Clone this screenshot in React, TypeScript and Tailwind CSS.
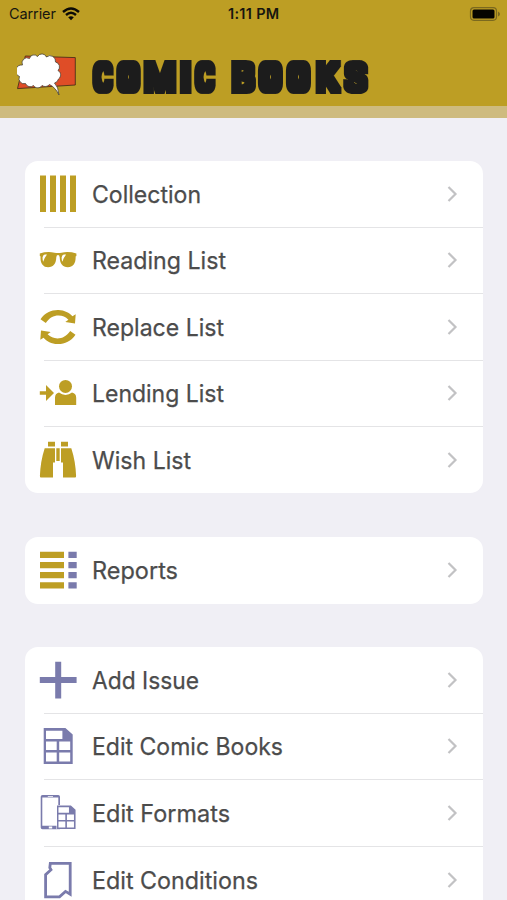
import type { ReactNode } from "react";

const GOLD = "#bd9e24";
const VIOLET = "#7a7bac";

type Item = { label: string; width: number; icon: ReactNode };

const Icon = ({ children }: { children: ReactNode }) => (
  <svg viewBox="0 0 38 38" className="h-[38px] w-[38px] shrink-0 overflow-visible">
    {children}
  </svg>
);

const CollectionIcon = () => (
  <Icon>
    <path fill={GOLD} d="M1 .5h6v36.500H1zM11 .5h6v36.500h-6zM21 .5h6v36.500h-6zM31 .5h6v36.500h-6z" />
  </Icon>
);

const GlassesIcon = () => (
  <Icon>
    <path
      fill={GOLD}
      d="M.8 12.600Q8 10.200 15.500 11.700Q19 12.500 22.500 11.700Q30 10.200 37.400 12.600L37.400 15L36.600 15.600C37 22 34 26.200 28.900 26.200C23.500 26.200 20.900 22.500 20.700 16.200Q20.500 14 19 14Q17.500 14 17.300 16.200C17.100 22.500 14.500 26.200 9.100 26.200C4 26.200 1 22 1.600 15.600L.8 15Z"
    />
    <path
      fill="#fff"
      d="M6 13.600Q3.600 14 3.500 16.600Q3.500 19 4.200 20.800Q5.600 16.500 8 13.500ZM25 13.600Q22.700 14 22.600 16.600Q22.600 19 23.300 20.800Q24.700 16.500 27.100 13.500Z"
    />
  </Icon>
);

const arrowArc =
  "M1.500 11.200C6 4.500 12.500 1.700 19.500 1.900C25.500 2.100 30.300 4.600 33.500 8.300L36.700 6.200L36 15.500L26.300 14L29.400 11.700C26.500 8.900 23.500 7.600 19.600 7.600C14.500 7.600 10.300 10 6.800 15Z";

const ReplaceIcon = () => (
  <Icon>
    <path fill={GOLD} d={arrowArc} />
    <path fill={GOLD} transform="rotate(180 19 19)" d={arrowArc} />
  </Icon>
);

const LendingIcon = () => (
  <Icon>
    <path fill={GOLD} d="M.8 17.200h6.200V11L15 19L7 27V20.800H.8z" />
    <circle fill={GOLD} cx="26.500" cy="12.400" r="6.500" />
    <path fill={GOLD} d="M16 31V23.700Q16 19.700 20 18.600Q23 20.900 26.500 20.900Q30 20.900 33 18.600Q37.200 19.700 37.200 23.700V31z" />
  </Icon>
);

const BinocularsIcon = () => (
  <Icon>
    <path
      fill={GOLD}
      d="M9 .8h7v4.800H9zM22 .8h7v4.800h-7zM5.700 7.300H16V21.500H14V36.500H2Q.8 36.500 .9 35Q1.500 20 5.700 7.300ZM22 7.300H32.300Q36.500 20 37.100 35Q37.200 36.500 36 36.500H24V21.500H22ZM17.300 7.300h3.400v12.800h-3.400z"
    />
  </Icon>
);

const ReportsIcon = () => (
  <Icon>
    <path fill={GOLD} d="M1 .8h24V7H1zM1 11h24v6.200H1zM1 21h24v6.200H1zM1 31.200h24v6.200H1z" />
    <path fill={VIOLET} d="M29.400.8H37.700V7h-8.300zM29.400 11h8.300v6.200h-8.300zM29.400 21h8.300v6.200h-8.300zM29.400 31.200h8.300v6.200h-8.300z" />
  </Icon>
);

const PlusIcon = () => (
  <Icon>
    <path fill={VIOLET} d="M16.200.8h6v15.300h15.400v6H22.200v15.300h-6V22.100H.8v-6h15.400z" />
  </Icon>
);

const SheetShape = () => (
  <path
    fill={VIOLET}
    fillRule="evenodd"
    d="M0 0H21.700L29 6.500V36H0ZM2.300 2.700V11H18.700V2.700ZM2.300 13.600V22H13V13.600ZM15.500 13.600V22H26.500V13.600ZM2.300 24.600V33.500H13V24.600ZM15.500 24.600V33.500H26.500V24.600Z"
  />
);

const SheetIcon = () => (
  <Icon>
    <g transform="translate(4.700 1)">
      <SheetShape />
    </g>
  </Icon>
);

const FormatsIcon = () => (
  <Icon>
    <path
      fill={VIOLET}
      fillRule="evenodd"
      d="M3.500.9H19.200Q21 .9 21 2.700V35.200H3.500Q1.700 35.200 1.700 33.400V2.700Q1.700.9 3.500.9ZM3.300 3.500V31.700H19.300V3.500ZM8.800 2H14V2.700H8.800ZM9.800 32.500V34.500H13.200V32.500Z"
    />
    <path fill="#fff" d="M17.500 11H33L37 15V35.200H17.500z" />
    <g transform="translate(18 11.500) scale(.64 .655)">
      <SheetShape />
    </g>
  </Icon>
);

const ConditionsIcon = () => (
  <Icon>
    <path
      fill="none"
      stroke={VIOLET}
      strokeWidth="2.800"
      d="M11.300 2.300H31.200V33.200L26.500 30.400L20.500 35.800H6.600V13.700L12 8.800L10.800 6.700Z"
    />
  </Icon>
);

const sections: Item[][] = [
  [
    { label: "Collection", width: 109, icon: <CollectionIcon /> },
    { label: "Reading List", width: 134, icon: <GlassesIcon /> },
    { label: "Replace List", width: 132, icon: <ReplaceIcon /> },
    { label: "Lending List", width: 132, icon: <LendingIcon /> },
    { label: "Wish List", width: 99, icon: <BinocularsIcon /> },
  ],
  [{ label: "Reports", width: 86, icon: <ReportsIcon /> }],
  [
    { label: "Add Issue", width: 107, icon: <PlusIcon /> },
    { label: "Edit Comic Books", width: 191, icon: <SheetIcon /> },
    { label: "Edit Formats", width: 138, icon: <FormatsIcon /> },
    { label: "Edit Conditions", width: 166, icon: <ConditionsIcon /> },
  ],
];

const Row = ({ item, last }: { item: Item; last: boolean }) => (
  <div className="flex h-[66.400px] flex-col">
    <div className="flex flex-1 items-center pr-[25px] pl-[14px]">
      {item.icon}
      <svg className="ml-[14px] h-[34px] w-[220px] overflow-visible">
        <text
          x="1"
          y="25.800"
          textLength={item.width}
          lengthAdjust="spacingAndGlyphs"
          strokeWidth=".25"
          className="fill-[#4c4c4c] stroke-[#4c4c4c] font-['Inter',sans-serif] text-[24px]"
        >
          {item.label}
        </text>
      </svg>
      <svg viewBox="0 0 12 18" className="ml-auto h-[18px] w-[12px]">
        <path d="M2.500 2L9.500 9L2.500 16" fill="none" stroke="#c2c2c4" strokeWidth="2.200" />
      </svg>
    </div>
    {!last && <div className="ml-[19px] h-px bg-[#e4e4e6]" />}
  </div>
);

const CloudLogo = () => (
  <svg viewBox="0 0 60 44" className="h-[44px] w-[60px]">
    <path d="M8.300 3L58.300 4.600V32L.5 35.600Z" fill="#df4d27" stroke="#3c2a18" strokeWidth=".8" />
    <path
      d="M5.500 12A5 5 0 0 1 12.500 5.500A4.600 4.600 0 0 1 20.500 3.500A5 5 0 0 1 29.500 4A5.500 5.500 0 0 1 38.500 9A5 5 0 0 1 41 17.500A5 5 0 0 1 41.500 26A5.500 5.500 0 0 1 37.500 30Q41.500 34 42 42Q38.500 34.500 32.500 31.500A5.500 5.500 0 0 1 25 32.500A5 5 0 0 1 16.500 32.500A5 5 0 0 1 8.500 30.500A5 5 0 0 1 2.500 23.500A6 6 0 0 1 5.500 12Z"
      fill="#fff"
      stroke="#4a4436"
      strokeWidth=".8"
    />
  </svg>
);

const SLAB = "[filter:url(#slab)] text-[39px] font-medium";
const BLOCK = "[filter:url(#block)] -translate-y-px text-[34px] font-light";

type LetterProps = { box: string; shape: string; face?: string; children: string };

const Letter = ({ box, shape, face = SLAB, children }: LetterProps) => (
  <span className={`flex justify-center leading-[46px] ${face} ${box}`}>
    <span className={`inline-block ${shape}`}>{children}</span>
  </span>
);

const Title = () => (
  <>
    <svg className="absolute h-0 w-0">
      <filter id="slab" x="-40%" y="-10%" width="180%" height="120%">
        <feMorphology operator="dilate" radius="3" />
      </filter>
      <filter id="block" x="-40%" y="-10%" width="180%" height="120%">
        <feMorphology operator="dilate" radius="5" />
      </filter>
    </svg>
    <h1 className="flex h-[46px] font-['Roboto',sans-serif] text-[#1e1e1e]">
      <Letter box="w-[24px]" shape="scale-x-[.71]">C</Letter>
      <Letter box="w-[27px]" shape="scale-x-[.78]" face={BLOCK}>O</Letter>
      <Letter box="w-[36px]" shape="scale-x-[.95]">M</Letter>
      <Letter box="w-[15px]" shape="scale-x-[1.2]">I</Letter>
      <Letter box="w-[24px]" shape="scale-x-[.71]">C</Letter>
      <span className="w-[12px]"> </span>
      <Letter box="w-[28px]" shape="scale-x-[.95]">B</Letter>
      <Letter box="w-[28px]" shape="scale-x-[.8]" face={BLOCK}>O</Letter>
      <Letter box="w-[28px]" shape="scale-x-[.8]" face={BLOCK}>O</Letter>
      <Letter box="w-[29px]" shape="scale-x-[.92]">K</Letter>
      <Letter box="w-[27px]" shape="scale-x-[.93]">S</Letter>
    </h1>
  </>
);

const StatusBar = () => (
  <div className="flex h-[28px] items-center pr-[6px] pl-[9px] font-['Inter',sans-serif] text-[#17160f]">
    <div className="flex w-[219px] items-center gap-[6px]">
      <span className="w-[47px] text-[14.500px] tracking-[-0.100px]">Carrier</span>
      <svg viewBox="0 0 18 14" className="h-[14px] w-[18px]">
        <path fill="none" stroke="#0c0b06" strokeWidth="2.400" d="M1 5Q9-2 17 5M4 8Q9 3.600 14 8" />
        <path fill="#0c0b06" d="M6.200 10.300Q9 8 11.800 10.300L9 13.300Z" />
      </svg>
    </div>
    <span className="w-[60px] text-[14.500px] font-semibold tracking-[0.300px] whitespace-nowrap">1:11 PM</span>
    <svg viewBox="0 0 32 14" className="ml-auto h-[14px] w-[32px]">
      <rect x="1.500" y=".7" width="26" height="12.600" rx="3.500" fill="none" stroke="#7b691f" strokeWidth="1.200" />
      <rect x="3.500" y="2.600" width="22" height="8.800" rx="1.500" fill="#060500" />
      <path d="M29 4.500Q31 5.500 31 7T29 9.500Z" fill="#7b691f" />
    </svg>
  </div>
);

export default function App() {
  return (
    <div className="h-[900px] w-full overflow-hidden bg-[#f0eff5]">
      <header className="h-[118px] border-b-[12px] border-[#cebb7f] bg-[#bd9e24]">
        <StatusBar />
        <div className="flex pt-[25px] pl-[17px]">
          <CloudLogo />
          <div className="mt-[2px] ml-[14px]">
            <Title />
          </div>
        </div>
      </header>
      <main className="flex flex-col gap-[43.800px] pt-[43.400px] pr-[24px] pl-[25px]">
        {sections.map((items, s) => (
          <section key={s} className="overflow-hidden rounded-[13px] bg-white">
            {items.map((item, i) => (
              <Row key={item.label} item={item} last={i === items.length - 1} />
            ))}
          </section>
        ))}
      </main>
    </div>
  );
}
